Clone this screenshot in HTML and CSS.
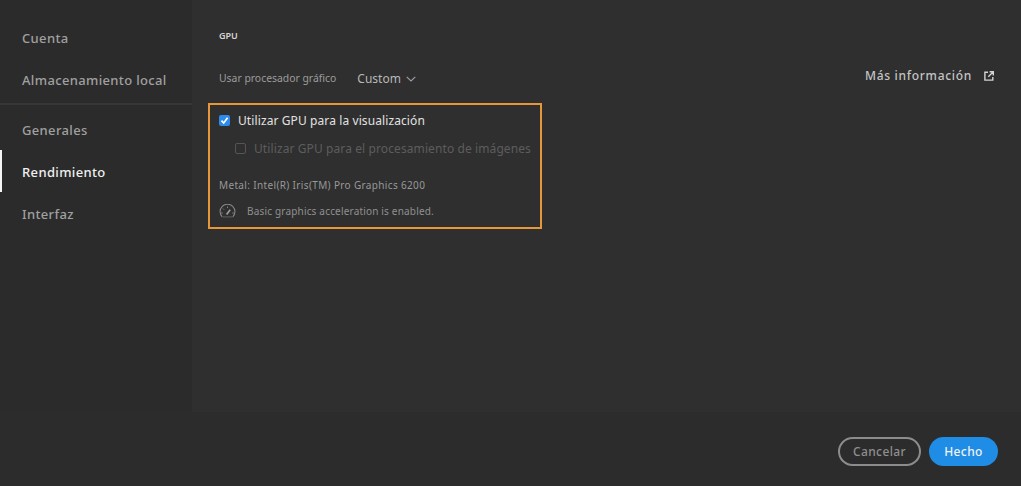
FILE: index.html
```html
<!DOCTYPE html>
<html lang="es">
<head>
<meta charset="utf-8">
<title>Preferencias</title>
<link rel="stylesheet" href="styles.css">
</head>
<body>
<div class="app">
  <div class="main">
    <nav class="sidebar">
      <div class="nav-group first">
        <div class="nav-item">Cuenta</div>
        <div class="nav-item">Almacenamiento local</div>
      </div>
      <div class="nav-group second">
        <div class="nav-item">Generales</div>
        <div class="nav-item active">Rendimiento</div>
        <div class="nav-item">Interfaz</div>
      </div>
    </nav>
    <section class="content">
      <h2 class="title">GPU</h2>
      <div class="top-row">
        <span class="label">Usar procesador gráfico</span>
        <span class="select">Custom
          <svg class="chev" width="10" height="6" viewBox="0 0 10 6"><path d="M.7.8 5 5 9.3.8" fill="none" stroke="#a0a0a0" stroke-width="1.1"/></svg>
        </span>
        <span class="more">Más información
          <svg class="ext" width="10" height="10" viewBox="0 0 10 10"><path d="M4 1.2H.9v7.9h7.9V6M5.6.7h3.7v3.7M9 1 4.3 5.7" fill="none" stroke="#d4d4d4" stroke-width="1.4"/></svg>
        </span>
      </div>
      <div class="box">
        <div class="check-row">
          <span class="check on"><svg width="11" height="11" viewBox="0 0 11 11"><path d="M2.5 5.6 4.7 8 8.6 2.8" fill="none" stroke="#fff" stroke-width="1.7"/></svg></span>
          <span class="check-text">Utilizar GPU para la visualización</span>
        </div>
        <div class="check-row sub">
          <span class="check off"></span>
          <span class="check-text dim">Utilizar GPU para el procesamiento de imágenes</span>
        </div>
        <div class="metal">Metal: Intel(R) Iris(TM) Pro Graphics 6200</div>
        <div class="status">
          <svg class="gauge" width="17" height="14" viewBox="0 0 17 14"><path d="M3.2 12.8A7.4 7.4 0 1 1 13.8 12.8" fill="none" stroke="#858585" stroke-width="1.1"/><path d="M3.4 12.9h10.2" stroke="#5e5e5e"/><path d="M7.6 10.4 11.2 5.8" stroke="#a0a0a0" stroke-width="1.6"/><path d="M8.5 2.6v1.5M4 4.6l1 1M2.2 9h1.5M13.3 9h1.5" stroke="#858585"/></svg>
          <span>Basic graphics acceleration is enabled.</span>
        </div>
      </div>
    </section>
  </div>
  <footer class="footer">
    <button class="btn cancel">Cancelar</button>
    <button class="btn done">Hecho</button>
  </footer>
</div>
</body>
</html>
```
FILE: styles.css
```css
* { box-sizing: border-box; }
html, body { margin: 0; height: 100%; }
body {
  background: #2c2c2c;
  font-family: "Noto Sans", "Open Sans", sans-serif;
  color: #b0b0b0;
  overflow: hidden;
}
.app { width: 1021px; height: 486px; display: flex; flex-direction: column; }
.main { height: 412px; display: flex; }
.sidebar { width: 192px; background: #2b2b2b; flex: none; }
.nav-group { padding: 3px 0 4px; }
.nav-group.first { padding: 17px 0 2px; border-bottom: 2px solid #363636; }
.nav-item {
  height: 42px;
  padding-left: 22px;
  display: flex;
  align-items: center;
  font-size: 13px;
  font-weight: 500;
  letter-spacing: .35px;
  color: #a0a0a0;
}
.second .nav-item { padding-top: 2px; }
.nav-item.active { color: #f0f0f0; border-left: 2px solid #f5f5f5; padding-left: 20px; }
.content { flex: 1; background: #2f2f2f; padding: 29px 27px 0; }
.title { margin: 0; font-size: 9px; line-height: 13px; font-weight: 600; color: #d6d6d6; }
.top-row { display: flex; align-items: center; margin-top: 23px; height: 26px; }
.label { font-size: 10.4px; color: #9c9c9c; }
.select { font-size: 12px; color: #b8b8b8; margin-left: 21px; display: flex; align-items: center; gap: 5px; }
.chev { margin-top: 1px; }
.more {
  margin-left: auto;
  margin-top: -5px;
  font-size: 12px;
  font-weight: 500;
  letter-spacing: .7px;
  color: #c4c4c4;
  display: flex;
  align-items: center;
  gap: 12px;
}
.box {
  margin: 12px 0 0 -11px;
  width: 334px;
  height: 126px;
  border: 2px solid #e8963a;
  padding: 1px 0 0 9px;
}
.check-row { display: flex; align-items: center; height: 28px; gap: 8px; }
.check-row.sub { padding-left: 16px; }
.check { width: 11px; height: 11px; border-radius: 2px; flex: none; display: block; }
.check.on { background: #2d8ceb; }
.check.on svg { display: block; }
.check.off { border: 1px solid #555; }
.check-text { font-size: 12px; color: #e2e2e2; letter-spacing: .1px; }
.check-text.dim { color: #5d5d5d; }
.metal { font-size: 10px; color: #989898; margin-top: 16px; line-height: 14px; letter-spacing: .35px; }
.status { display: flex; align-items: center; gap: 11px; margin-top: 12px; font-size: 10px; color: #8f8f8f; letter-spacing: .18px; }
.gauge { flex: none; }
.footer { flex: 1; display: flex; justify-content: flex-end; align-items: flex-start; gap: 8px; padding: 25px 23px 0 0; background: #2c2c2c; }
.btn {
  height: 29px;
  border-radius: 15px;
  font-family: inherit;
  font-size: 12px;
  font-weight: 500;
  letter-spacing: .4px;
  padding: 0;
}
.cancel { width: 83px; background: transparent; border: 2px solid #8c8c8c; color: #8f8f8f; }
.done { width: 69px; background: #1f8ce6; border: none; color: #f2f2f2; }
```
